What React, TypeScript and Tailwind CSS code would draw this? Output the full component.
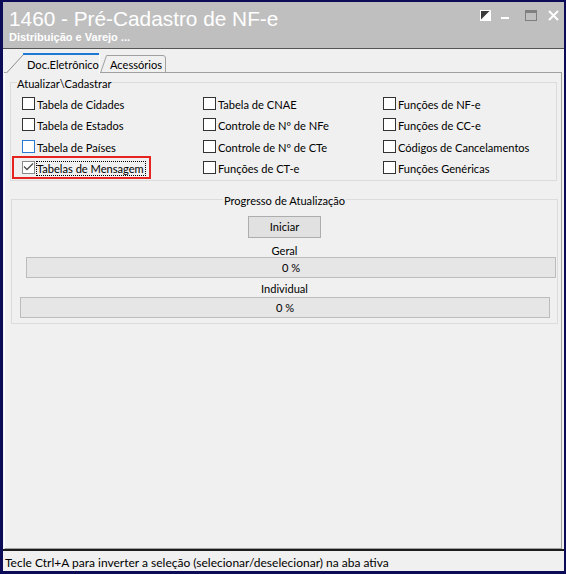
import React from "react";

type Item = { label: string; checked?: boolean; hot?: boolean; focused?: boolean };

const rows: Item[][] = [
  [{ label: "Tabela de Cidades" }, { label: "Tabela de CNAE" }, { label: "Funções de NF-e" }],
  [{ label: "Tabela de Estados" }, { label: "Controle de Nº de NFe" }, { label: "Funções de CC-e" }],
  [{ label: "Tabela de Países", hot: true }, { label: "Controle de Nº de CTe" }, { label: "Códigos de Cancelamentos" }],
  [{ label: "Tabelas de Mensagem", checked: true, focused: true }, { label: "Funções de CT-e" }, { label: "Funções Genéricas" }],
];

function CheckBox({ checked, hot }: { checked?: boolean; hot?: boolean }) {
  const border = checked ? "border-[#8a8a8a]" : hot ? "border-[#2a7ad4]" : "border-[#333333]";
  return (
    <span className={`relative block w-[13px] h-[13px] shrink-0 bg-white border ${border}`}>
      {checked && (
        <svg className="absolute left-0 top-0" width="11" height="11" viewBox="0 0 11 11">
          <path d="M1 4.5 L4 7.5 L10 1.5" fill="none" stroke="#4d4d4d" strokeWidth="1.3" />
        </svg>
      )}
    </span>
  );
}

function Option({ item, highlight }: { item: Item; highlight?: boolean }) {
  return (
    <div className="relative flex items-start pt-[4px]">
      {highlight && (
        <div className="absolute left-[-10px] top-[-1px] w-[139px] h-[23px] border-2 border-[#e52420]" />
      )}
      <CheckBox checked={item.checked} hot={item.hot} />
      {item.focused ? (
        <span className="ml-[1px] leading-[13px] h-[15px] whitespace-nowrap border border-dotted border-black pr-[1px]">
          {item.label}
        </span>
      ) : (
        <span className="ml-[2px] leading-[15px] whitespace-nowrap">{item.label}</span>
      )}
    </div>
  );
}

function TitleIcons() {
  return (
    <div className="flex items-start pt-[8px] pr-[5px]">
      <svg width="11" height="11" viewBox="0 0 11 11">
        <rect x="0" y="0" width="11" height="11" fill="#ffffff" />
        <polygon points="1,1 9.5,1 1,9.5" fill="#3a3a3a" />
      </svg>
      <svg className="ml-[10px]" width="8" height="11" viewBox="0 0 8 11">
        <rect x="0" y="7" width="8" height="2" fill="#ffffff" />
      </svg>
      <svg className="ml-[16px]" width="12" height="11" viewBox="0 0 12 11">
        <rect x="0.5" y="0.5" width="11" height="10" fill="none" stroke="#7f7f7f" />
        <rect x="0" y="0" width="12" height="3" fill="#7f7f7f" />
      </svg>
      <svg className="ml-[11px]" width="11" height="11" viewBox="0 0 11 11">
        <path d="M1 1 L10 10 M10 1 L1 10" stroke="#ffffff" strokeWidth="2" />
      </svg>
    </div>
  );
}

function Tabs() {
  return (
    <div className="flex items-end h-[21px]">
      <div className="w-[2px] h-full border-b border-[#a0a0a0]" />
      <div className="relative w-[94px] h-full">
        <svg className="absolute left-0 top-0" width="94" height="21" viewBox="0 0 94 21">
          <path d="M0.5 21 L17.5 2.5" fill="none" stroke="#8e8e8e" />
          <path d="M17 2 H93" fill="none" stroke="#1f78d4" strokeWidth="2" />
          <path d="M93.5 3 V21" fill="none" stroke="#ffffff" />
        </svg>
        <span className="absolute left-[21px] top-[5px] leading-[16px] whitespace-nowrap">Doc.Eletrônico</span>
      </div>
      <div className="relative w-[66px] h-full border-b border-[#a0a0a0]">
        <svg className="absolute left-0 top-0" width="66" height="21" viewBox="0 0 66 21">
          <path d="M0.5 21 L6.5 3.5 H63 Q65.5 3.5 65.5 6 V21" fill="none" stroke="#a0a0a0" />
        </svg>
        <span className="absolute left-[10px] top-[5px] leading-[16px] whitespace-nowrap">Acessórios</span>
      </div>
      <div className="flex-1 h-full border-b border-[#a0a0a0]" />
    </div>
  );
}

export default function App() {
  return (
    <div className="w-[566px] h-[574px] bg-[#0b0b57] pt-[2px] pl-[3px] pr-[2px] pb-[3px] font-['Lato',sans-serif] text-[11.1px] text-black">
      <div className="flex flex-col h-full bg-[#bfbfbf]">
        <div className="h-[47px] shrink-0 flex justify-between border-b border-[#555555]">
          <div className="pl-[6px] pt-[5px] text-white font-['Liberation_Sans',Arial,sans-serif]">
            <div className="text-[20.8px] leading-[24px]">1460 - Pré-Cadastro de NF-e</div>
            <div className="text-[11px] leading-[13px] font-bold">Distribuição e Varejo ...</div>
          </div>
          <TitleIcons />
        </div>

        <div className="flex-1 flex flex-col bg-[#f0f0f0] pt-[3px] pl-[1px] pr-[2px]">
          <Tabs />
          <div className="flex-1 flex flex-col border-l border-l-white border-r border-b border-[#a0a0a0]">
            <fieldset className="ml-[5px] mr-[4px] border border-[#dcdcdc] pb-[2px]">
              <legend className="ml-[6px] pt-[4px] leading-[14px]">Atualizar\Cadastrar</legend>
              <div className="grid grid-cols-[181px_180px_1fr] grid-rows-[21px_22px_21px_21px] pl-[11px] mt-[2px]">
                {rows.map((row, r) =>
                  row.map((item, c) => (
                    <Option key={`${r}-${c}`} item={item} highlight={r === 3 && c === 0} />
                  ))
                )}
              </div>
            </fieldset>

            <fieldset className="mt-[9px] ml-[6px] mr-[3px] border border-[#dcdcdc] pb-[5px] flex flex-col">
              <legend className="mx-auto px-[1px] pt-[4px] leading-[14px]">Progresso de Atualização</legend>
              <div className="flex justify-center mt-[8px]">
                <button className="w-[73px] h-[22px] bg-[#e1e1e1] border border-[#adadad] leading-[20px]">Iniciar</button>
              </div>
              <div className="text-center leading-[12px] mt-[7px]">Geral</div>
              <div className="ml-[14px] mr-[1px] h-[21px] bg-[#e6e6e6] border border-[#bcbcbc] flex items-center justify-center leading-[19px]">
                0 %
              </div>
              <div className="text-center leading-[12px] mt-[5px]">Individual</div>
              <div className="mt-[2px] ml-[8px] mr-[7px] h-[21px] bg-[#e6e6e6] border border-[#bcbcbc] flex items-center justify-center leading-[19px]">
                0 %
              </div>
            </fieldset>
          </div>
        </div>

        <div className="h-[22px] shrink-0 border-t-2 border-[#1c1c1c] bg-[#f0f0f0] pl-[2px] pt-[3px] text-[12px] leading-[17px] whitespace-nowrap">
          Tecle Ctrl+A para inverter a seleção (selecionar/deselecionar) na aba ativa
        </div>
      </div>
    </div>
  );
}
